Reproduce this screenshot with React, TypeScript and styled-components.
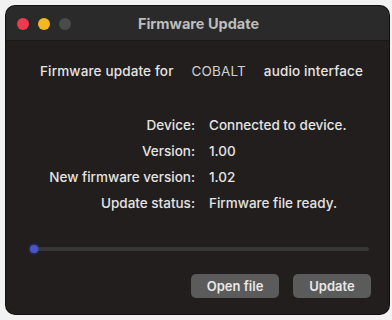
import React from 'react';
import styled, { createGlobalStyle } from 'styled-components';

const GlobalStyle = createGlobalStyle`
  html, body {
    margin: 0;
    padding: 0;
    background: #f2f2f2;
  }
  body {
    width: 392px;
    height: 320px;
    overflow: hidden;
    font-family: Inter, 'Liberation Sans', sans-serif;
  }
`;

type InfoRow = { label: string; value: string };

const rows: InfoRow[] = [
  { label: 'Device:', value: 'Connected to device.' },
  { label: 'Version:', value: '1.00' },
  { label: 'New firmware version:', value: '1.02' },
  { label: 'Update status:', value: 'Firmware file ready.' },
];

export default function App() {
  const progress = 0;
  return (
    <>
      <GlobalStyle />
      <Page>
        <Window>
          <TitleBar>
            <Lights>
              <Light color="#ee3a4f" />
              <Light color="#f3b821" />
              <Light color="#4a4a4a" />
            </Lights>
            <Title>Firmware Update</Title>
          </TitleBar>
          <Body>
            <Heading>
              <span>Firmware update for</span>
              <Model>COBALT</Model>
              <span>audio interface</span>
            </Heading>
            <InfoGrid>
              {rows.map((r) => (
                <React.Fragment key={r.label}>
                  <Label>{r.label}</Label>
                  <Value>{r.value}</Value>
                </React.Fragment>
              ))}
            </InfoGrid>
            <Track>
              <Fill style={{ width: `${progress}%` }} />
              <Knob />
            </Track>
            <Buttons>
              <Button>Open file</Button>
              <Button>Update</Button>
            </Buttons>
          </Body>
        </Window>
      </Page>
    </>
  );
}

const Page = styled.div`
  padding: 6px 3px 0 6px;
  height: 320px;
  box-sizing: border-box;
`;

const Window = styled.div`
  display: flex;
  flex-direction: column;
  height: 308px;
  border-radius: 9px;
  overflow: hidden;
  background: #221e1d;
  box-shadow: 0 0 0 1px #111;
`;

const TitleBar = styled.div`
  position: relative;
  display: flex;
  align-items: center;
  justify-content: center;
  height: 34px;
  background: #2b2a2a;
  border-bottom: 1px solid #1a1817;
`;

const Lights = styled.div`
  position: absolute;
  left: 11px;
  top: 12px;
  display: flex;
  gap: 9px;
`;

const Light = styled.div<{ color: string }>`
  width: 12px;
  height: 12px;
  border-radius: 50%;
  background: ${({ color }) => color};
`;

const Title = styled.div`
  font-size: 14.5px;
  font-weight: 700;
  color: #bdbdbd;
  margin-left: 2px;
  margin-top: 1px;
`;

const Body = styled.div`
  display: flex;
  flex-direction: column;
  padding: 22px 18px 0 24px;
  color: #e4e4e4;
  font-size: 13.5px;
  font-weight: 500;
`;

const Heading = styled.div`
  display: flex;
  gap: 18px;
  padding-left: 10px;
  letter-spacing: 0.15px;
`;

const Model = styled.span`
  font-weight: 400;
  color: #cfcfcf;
`;

const InfoGrid = styled.div`
  display: grid;
  grid-template-columns: 165px auto;
  column-gap: 14px;
  row-gap: 10px;
  margin-top: 38px;
  line-height: 16px;
`;

const Label = styled.div`
  text-align: right;
`;

const Value = styled.div``;

const Track = styled.div`
  position: relative;
  height: 4px;
  margin: 36px 2px 0 2px;
  border-radius: 2px;
  background: #393735;
`;

const Fill = styled.div`
  height: 100%;
  background: #3b4fc0;
  border-radius: 2px;
`;

const Knob = styled.div`
  position: absolute;
  left: -2px;
  top: -2px;
  width: 8px;
  height: 8px;
  border-radius: 50%;
  background: #4656c8;
  box-shadow: 0 0 3px #3c4fd8;
`;

const Buttons = styled.div`
  display: flex;
  justify-content: flex-end;
  gap: 14px;
  margin-top: 23px;
`;

const Button = styled.button`
  height: 24px;
  padding: 0 10px;
  border: none;
  border-radius: 5px;
  background: #5b5b5b;
  color: #e8e8e8;
  font-family: inherit;
  font-size: 13px;
  font-weight: 600;
  &:first-child {
    width: 88px;
  }
  &:last-child {
    width: 78px;
  }
`;
